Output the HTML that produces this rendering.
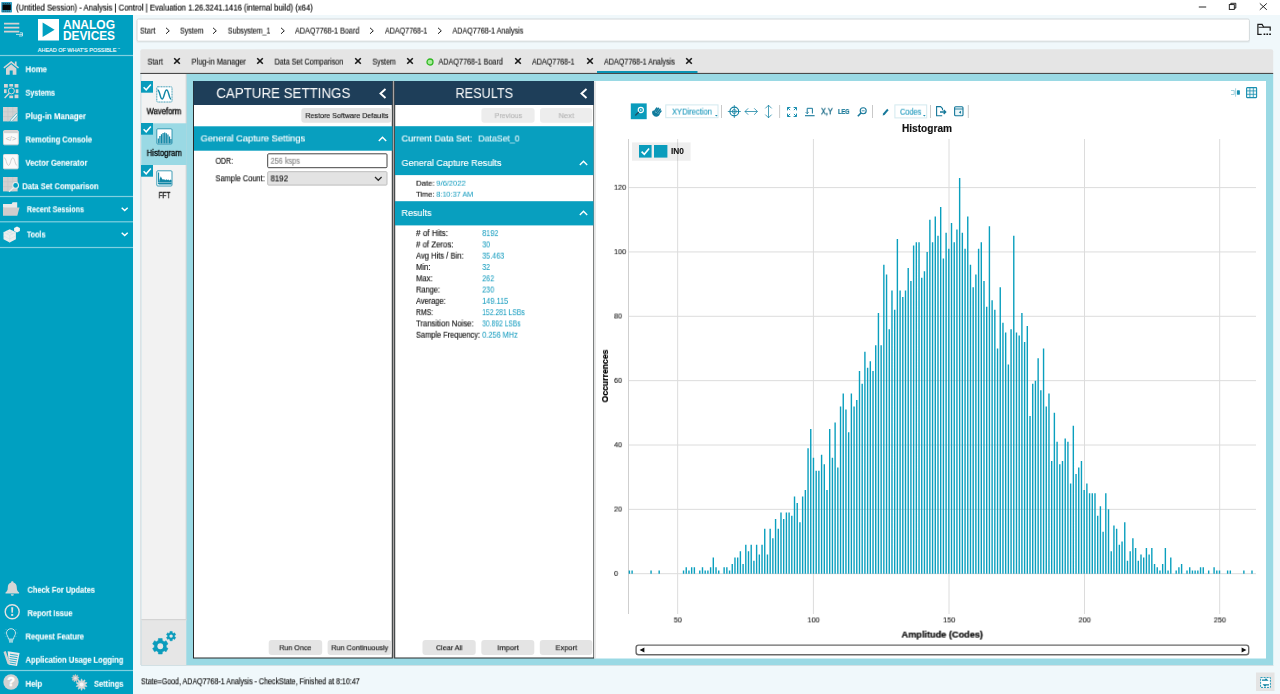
<!DOCTYPE html>
<html lang="en"><head><meta charset="utf-8"><title>(Untitled Session) - Analysis | Control | Evaluation</title><style>
*{box-sizing:border-box;margin:0;padding:0}
html,body{width:1280px;height:694px;overflow:hidden;background:#f0f8fb;font-family:"Liberation Sans",sans-serif}
#app{position:relative;width:1280px;height:694px;overflow:hidden}
.b{position:absolute}
.t{position:absolute;white-space:nowrap;transform-origin:0 50%;will-change:transform;-webkit-text-stroke:.15px}
svg{position:absolute;overflow:visible}
svg.f{left:0;top:0}
svg text{font-family:"Liberation Sans",sans-serif}
</style></head><body><div id="app">
<svg class="f" width="1280" height="694" viewBox="0 0 1280 694">
<rect x="0" y="0" width="1280" height="15" fill="#ffffff"/>
</svg>
<svg style="left:2px;top:1px" width="12" height="12" viewBox="0 0 12 12"><rect x="-.7" y="0.9" width="10.7" height="10.5" rx=".7" fill="#2f9cc0"/><rect x=".5" y="3.5" width="8.3" height="5.5" fill="#050708"/><path d="M.6 2.5h8M.6 10.1h8" stroke="#123645" stroke-width="1" stroke-dasharray="1.2 .8"/></svg>
<span class="t" style="left:16px;top:1px;font-size:8.6px;line-height:12px;color:#000;transform:translate(0.00px,0.60px) scaleX(0.900);">(Untitled Session) - Analysis | Control | Evaluation 1.26.3241.1416 (internal build) (x64)</span>
<svg style="left:1190px;top:0" width="90" height="15" viewBox="0 0 90 15" fill="none" stroke="#111" stroke-width="0.9"><path d="M8.8 7h7.4"/><rect x="39.3" y="4.6" width="5" height="4.8"/><path d="M40.8 4.6V3.3h5v4.8h-1.5"/><path d="M69.8 3.4l7 6.4M76.8 3.4l-7 6.4"/></svg>
<svg class="f" width="1280" height="694" viewBox="0 0 1280 694">
<rect x="0" y="15" width="133" height="679" fill="#00a0c1"/>
<rect x="0" y="54.9" width="133" height="1.2" fill="rgba(255,255,255,.5)"/>
<rect x="0" y="195.9" width="133" height="1.2" fill="rgba(255,255,255,.5)"/>
<rect x="0" y="221.2" width="133" height="1.2" fill="rgba(255,255,255,.5)"/>
<rect x="0" y="246.9" width="133" height="1.2" fill="rgba(255,255,255,.5)"/>
<rect x="0" y="669.9" width="133" height="1.2" fill="rgba(255,255,255,.5)"/>
</svg>
<svg style="left:3px;top:21px" width="22" height="18" viewBox="0 0 22 18" fill="none" stroke="#d8d2d2" stroke-width="1.6"><path d="M1 2.6h15.300M1 6.600h15.300M1 10.600h15.3"/><path stroke-width="0.9" stroke="#cfe6ec" d="M13 13.400h6.500M17 11.800h2.500v3.200H16"/></svg>
<svg style="left:38px;top:18px" width="82" height="36" viewBox="0 0 82 36"><rect x="0" y="1" width="21" height="21.5" fill="#fff"/><path d="M4.6 4.6v14.3l12-7.15z" fill="#00a0c1"/><text x="25" y="10.6" font-size="12.6" font-weight="700" fill="#fff" textLength="52" lengthAdjust="spacingAndGlyphs">ANALOG</text><text x="25" y="22.4" font-size="12.6" font-weight="700" fill="#fff" textLength="52" lengthAdjust="spacingAndGlyphs">DEVICES</text><text x="-.2" y="33.5" font-size="5.6" fill="#f4fbfd" stroke="#f4fbfd" stroke-width=".15" textLength="78.5" lengthAdjust="spacingAndGlyphs">AHEAD OF WHAT'S POSSIBLE</text><text x="79.3" y="31.6" font-size="3" fill="#f4fbfd">™</text></svg>
<span class="t" style="left:25px;top:63px;font-size:8.6px;line-height:12px;color:#fff;transform:translate(0.50px,0.30px) scaleX(0.900);font-weight:700;-webkit-text-stroke:0.08px;">Home</span>
<span class="t" style="left:25px;top:86px;font-size:8.6px;line-height:12px;color:#fff;transform:translate(0.50px,0.70px) scaleX(0.834);font-weight:700;-webkit-text-stroke:0.08px;">Systems</span>
<span class="t" style="left:25px;top:110px;font-size:8.6px;line-height:12px;color:#fff;transform:translate(0.50px,0.20px) scaleX(0.904);font-weight:700;-webkit-text-stroke:0.08px;">Plug-in Manager</span>
<span class="t" style="left:25px;top:133px;font-size:8.6px;line-height:12px;color:#fff;transform:translate(0.50px,0.50px) scaleX(0.875);font-weight:700;-webkit-text-stroke:0.08px;">Remoting Console</span>
<span class="t" style="left:25px;top:156px;font-size:8.6px;line-height:12px;color:#fff;transform:translate(0.50px,0.80px) scaleX(0.886);font-weight:700;-webkit-text-stroke:0.08px;">Vector Generator</span>
<span class="t" style="left:22px;top:180px;font-size:8.6px;line-height:12px;color:#fff;transform:translate(0.30px,0.20px) scaleX(0.876);font-weight:700;-webkit-text-stroke:0.08px;">Data Set Comparison</span>
<span class="t" style="left:26px;top:203px;font-size:8.6px;line-height:12px;color:#fff;transform:translate(0.80px,0.30px) scaleX(0.832);font-weight:700;-webkit-text-stroke:0.08px;">Recent Sessions</span>
<span class="t" style="left:26px;top:228px;font-size:8.6px;line-height:12px;color:#fff;transform:translate(0.80px,0.50px) scaleX(0.843);font-weight:700;-webkit-text-stroke:0.08px;">Tools</span>
<span class="t" style="left:27px;top:583px;font-size:8.6px;line-height:12px;color:#fff;transform:translate(0.50px,0.80px) scaleX(0.861);font-weight:700;-webkit-text-stroke:0.08px;">Check For Updates</span>
<span class="t" style="left:27px;top:607px;font-size:8.6px;line-height:12px;color:#fff;transform:translate(0.50px,0.20px) scaleX(0.864);font-weight:700;-webkit-text-stroke:0.08px;">Report Issue</span>
<span class="t" style="left:25px;top:630px;font-size:8.6px;line-height:12px;color:#fff;transform:translate(0.50px,0.50px) scaleX(0.868);font-weight:700;-webkit-text-stroke:0.08px;">Request Feature</span>
<span class="t" style="left:25px;top:653px;font-size:8.6px;line-height:12px;color:#fff;transform:translate(0.50px,0.80px) scaleX(0.880);font-weight:700;-webkit-text-stroke:0.08px;">Application Usage Logging</span>
<span class="t" style="left:25px;top:677px;font-size:8.6px;line-height:12px;color:#fff;transform:translate(0.50px,0.80px) scaleX(0.901);font-weight:700;-webkit-text-stroke:0.08px;">Help</span>
<span class="t" style="left:94px;top:677px;font-size:8.6px;line-height:12px;color:#fff;transform:translate(0.00px,0.80px) scaleX(0.870);font-weight:700;-webkit-text-stroke:0.08px;">Settings</span>
<svg style="left:2.8px;top:60px" width="17" height="16" viewBox="0 0 17 16"><path d="M8.2 1L0.4 7.300l.9 1.100L8.2 3l6.9 5.4.9-1.1-2.4-1.900V1.600h-1.700v2.300z" fill="#d6d6d6"/><path d="M3 8.400v6.400h3.700v-4.300h3v4.300h3.700V8.400L8.2 4.300z" fill="#d6d6d6"/></svg>
<svg style="left:3.6px;top:84px" width="15" height="15" viewBox="0 0 15 15"><g fill="#d6d6d6"><rect x="0" y="0" width="3.8" height="3.6"/><rect x="5.3" y="0" width="3.8" height="2.6"/><rect x="10.6" y="0" width="3.8" height="3.6"/><rect x="0" y="5.3" width="2.6" height="3.8"/><rect x="11.8" y="5.3" width="2.6" height="3.8"/><rect x="5.3" y="11.6" width="3.8" height="2.6"/><rect x="10.6" y="10.6" width="3.8" height="3.6"/></g><circle cx="7.4" cy="6.9" r="3" fill="none" stroke="#d6d6d6" stroke-width="1"/><path d="M5.2 9.300L.6 14" stroke="#d6d6d6" stroke-width="1.5"/></svg>
<svg style="left:3px;top:107px" width="16" height="15" viewBox="0 0 16 15"><rect x="0" y="0" width="14.6" height="14.4" fill="#d2d2d2"/><path d="M0 4.800h14.600M0 9.600h14.600M4.9 0v14.400M9.8 0v14.4" stroke="#c0c6c8" stroke-width=".7"/><path d="M7.6 12.800l5.8-6.4 1.6 1.4-5.8 6.4-2.3.8z" fill="#f0f0f0" stroke="#00a0c1" stroke-width=".5"/></svg>
<svg style="left:3px;top:130px" width="16" height="15.5" viewBox="0 0 16 15.5"><rect x=".5" y=".5" width="14.8" height="14.3" rx="1" fill="#fafafa" stroke="#dcd4d4"/><rect x="1" y="1" width="13.8" height="2.2" fill="#d4d4d4"/><text x="7.9" y="11.3" font-size="6.6" text-anchor="middle" fill="#b8b8b8" textLength="10.5" lengthAdjust="spacingAndGlyphs">&lt;/&gt;</text></svg>
<svg style="left:3.2px;top:153.5px" width="16" height="15.5" viewBox="0 0 16 15.5"><rect x=".5" y=".5" width="14.6" height="14.3" rx=".8" fill="#fafafa" stroke="#e2e2e2"/><path d="M1.2 3.800c2 0 2.3 7.6 4.3 7.600s2.3-7.6 4.3-7.6 2.3 7.6 4.3 7.6" fill="none" stroke="#c4c4c4" stroke-width=".8"/></svg>
<svg style="left:3px;top:177px" width="17" height="15.5" viewBox="0 0 17 15.5"><rect x="0" y="0" width="14.6" height="14.4" fill="#d3cfcf"/><path d="M0 4.800h14.600M0 9.600h14.600M4.9 0v14.400M9.8 0v14.4" stroke="#c3c6c8" stroke-width=".7"/><circle cx="12.6" cy="8.4" r="2.9" fill="#00a0c1" stroke="#ececec" stroke-width="1.1"/><path d="M10.4 10.700L6 14.7" stroke="#ececec" stroke-width="1.3"/></svg>
<svg style="left:3.2px;top:202px" width="17" height="15" viewBox="0 0 17 15"><path d="M0 2h8.600l1-1.700h4.600V7H0z" fill="#e9e9e9"/><path d="M0 13.800V5l1.6 .6h14.900l-2.2 8.200z" fill="#d0cccc"/></svg>
<svg style="left:3px;top:226px" width="18" height="17" viewBox="0 0 18 17"><path d="M6.7 3.300l6.2 3v7l-6.2 3.3-6.2-3.300v-7z" fill="#ededed"/><path d="M.5 6.300l6.2 3 6.2-3M6.7 9.300v7.300M3.6 4.800l6.2 3M9.8 4.800l-6.2 3M.5 9.800l6.2 3.2 6.2-3.2" stroke="#c9dfe5" stroke-width=".5" fill="none"/><path d="M14 .4l2.9 1.500v3.200L14 6.600l-2.9-1.500V1.900z" fill="#f4f4f4"/></svg>
<svg style="left:121px;top:207.2px" width="8" height="5" viewBox="0 0 8 5"><path d="M.7 .7l3 2.9 3-2.9" fill="none" stroke="#fff" stroke-width="1.4"/></svg>
<svg style="left:121px;top:232.39999999999998px" width="8" height="5" viewBox="0 0 8 5"><path d="M.7 .7l3 2.9 3-2.9" fill="none" stroke="#fff" stroke-width="1.4"/></svg>
<svg style="left:5px;top:580.5px" width="15" height="16" viewBox="0 0 15 16"><path d="M7.3 0.3c.8 0 1.2.5 1.2 1.2 2.2.7 3.3 2.6 3.3 5 0 3 1 4 2.3 5v1H.5v-1c1.3-1 2.3-2 2.3-5 0-2.4 1.1-4.3 3.3-5 0-.7.4-1.2 1.2-1.200z" fill="#d6d6d6"/><path d="M5.8 13.300h3a1.5 1.5 0 0 1-3 0z" fill="#d6d6d6"/></svg>
<svg style="left:4px;top:603.5px" width="17" height="17" viewBox="0 0 17 17"><circle cx="8.2" cy="7.8" r="7" fill="none" stroke="#e2e2e2" stroke-width="1.4"/><path d="M7.2 3.3h2l-.3 5.4H7.500z" fill="#e2e2e2"/><rect x="7.2" y="9.9" width="2" height="2" fill="#e2e2e2"/></svg>
<svg style="left:4px;top:627px" width="16" height="18" viewBox="0 0 16 18"><path d="M7 1.700c2.7 0 4.5 2 4.5 4.4 0 2.3-1.8 3.2-2 6H4.500c-.2-2.8-2-3.7-2-6C2.5 3.7 4.3 1.7 7 1.700z" fill="none" stroke="#c9e3e9" stroke-width="1"/><path d="M4.8 13.200h4.400M5 14.800h4" stroke="#c9e3e9" stroke-width="1.2"/><path d="M1.5 2l1 1M12.5 2l-1 1M.3 6h1.200M12.5 6h1.200M1.5 10l1-1M12.5 10l-1-1" stroke="#6fc3d6" stroke-width=".6"/></svg>
<svg style="left:3px;top:650px" width="17" height="18" viewBox="0 0 17 18"><path d="M4.6 1.200l12 1.8-2.6 13-7.8-1.200z" fill="#ebebeb"/><path d="M7 4.200l7.8 1.200M6.7 6.400l7.7 1.200M6.5 8.600l7.5 1.200M6.3 10.800l7.2 1.100M6.2 13l6.8 1" stroke="#00a0c1" stroke-width=".8"/><path d="M.5 1.900L2.7 1l4.2 11.7-.5 2.6-2-1.700z" fill="#d6d2d2"/></svg>
<svg style="left:3px;top:674.3px" width="16.5" height="16.5" viewBox="0 0 16.5 16.5"><circle cx="8" cy="8" r="7.7" fill="#d2d2d2"/><text x="8" y="12.4" font-size="12.5" font-weight="700" text-anchor="middle" fill="#fff" stroke="#fff" stroke-width=".5">?</text></svg>
<svg style="left:70px;top:672px" width="20" height="22" viewBox="0 0 20 22"><polygon points="4.68,3.87 5.22,2.50 5.58,2.50 6.12,3.87 6.35,3.95 7.63,3.25 7.92,3.49 7.45,4.88 7.57,5.08 9.01,5.38 9.07,5.74 7.82,6.51 7.78,6.74 8.69,7.89 8.51,8.21 7.06,7.99 6.88,8.15 6.84,9.61 6.49,9.74 5.52,8.64 5.28,8.64 4.31,9.74 3.96,9.61 3.92,8.15 3.74,7.99 2.29,8.21 2.11,7.89 3.02,6.74 2.98,6.51 1.73,5.74 1.79,5.38 3.23,5.08 3.35,4.88 2.88,3.49 3.17,3.25 4.45,3.95" fill="#c6c6c6" stroke="#c6c6c6" stroke-width=".5" stroke-linejoin="round"/><circle cx="5.4" cy="6.2" r="1.2" fill="#e4e4e4"/><polygon points="10.62,9.20 11.37,6.90 11.83,6.90 12.58,9.20 12.81,9.28 14.76,7.86 15.13,8.13 14.39,10.43 14.53,10.62 16.95,10.62 17.09,11.06 15.13,12.48 15.13,12.72 17.09,14.14 16.95,14.58 14.53,14.58 14.39,14.77 15.13,17.07 14.76,17.34 12.81,15.92 12.58,16.00 11.83,18.30 11.37,18.30 10.62,16.00 10.39,15.92 8.44,17.34 8.07,17.07 8.81,14.77 8.67,14.58 6.25,14.58 6.11,14.14 8.07,12.72 8.07,12.48 6.11,11.06 6.25,10.62 8.67,10.62 8.81,10.43 8.07,8.13 8.44,7.86 10.39,9.28" fill="#d8d8d8" stroke="#d8d8d8" stroke-width=".5" stroke-linejoin="round"/><circle cx="11.6" cy="12.6" r="2" fill="#f6f6f6"/></svg>
<svg class="f" width="1280" height="694" viewBox="0 0 1280 694">
<rect x="136.5" y="19.5" width="1113.4" height="23.2" rx="1.5" fill="rgba(0,0,0,.05)"/>
<rect x="137" y="19" width="1112.4" height="22.2" rx="1.5" fill="#fff" stroke="#d3d8da" stroke-width="1"/>
</svg>
<span class="t" style="left:140px;top:25px;font-size:8.3px;line-height:11px;color:#1a1a1a;transform:translate(0.00px,0.60px) scaleX(0.873);">Start</span>
<span class="t" style="left:180px;top:25px;font-size:8.3px;line-height:11px;color:#1a1a1a;transform:translate(0.00px,0.60px) scaleX(0.849);">System</span>
<span class="t" style="left:227px;top:25px;font-size:8.3px;line-height:11px;color:#1a1a1a;transform:translate(0.80px,0.60px) scaleX(0.845);">Subsystem_1</span>
<span class="t" style="left:295px;top:25px;font-size:8.3px;line-height:11px;color:#1a1a1a;transform:translate(0.00px,0.60px) scaleX(0.871);">ADAQ7768-1 Board</span>
<span class="t" style="left:385px;top:25px;font-size:8.3px;line-height:11px;color:#1a1a1a;transform:translate(0.00px,0.60px) scaleX(0.857);">ADAQ7768-1</span>
<span class="t" style="left:452px;top:25px;font-size:8.3px;line-height:11px;color:#1a1a1a;transform:translate(0.50px,0.60px) scaleX(0.862);">ADAQ7768-1 Analysis</span>
<svg style="left:164.8px;top:27px" width="6" height="8" viewBox="0 0 6 8"><path d="M1 .8l3.3 3-3.3 3" fill="none" stroke="#222" stroke-width="1"/></svg>
<svg style="left:211.8px;top:27px" width="6" height="8" viewBox="0 0 6 8"><path d="M1 .8l3.3 3-3.3 3" fill="none" stroke="#222" stroke-width="1"/></svg>
<svg style="left:279.5px;top:27px" width="6" height="8" viewBox="0 0 6 8"><path d="M1 .8l3.3 3-3.3 3" fill="none" stroke="#222" stroke-width="1"/></svg>
<svg style="left:368.8px;top:27px" width="6" height="8" viewBox="0 0 6 8"><path d="M1 .8l3.3 3-3.3 3" fill="none" stroke="#222" stroke-width="1"/></svg>
<svg style="left:437.3px;top:27px" width="6" height="8" viewBox="0 0 6 8"><path d="M1 .8l3.3 3-3.3 3" fill="none" stroke="#222" stroke-width="1"/></svg>
<svg style="left:1257px;top:23px" width="17" height="13" viewBox="0 0 17 13"><path d="M.9 11.300V1.400h4.200l1.6 2.800h6.500v3.6" fill="none" stroke="#1a1a1a" stroke-width="1.2"/><path d="M.3 11.400h4.4" stroke="#1a1a1a" stroke-width="1.2"/><path d="M6.6 11.300h1.700M9.4 11.300h1.700M12.2 11.300h1.7" stroke="#111" stroke-width="1.5"/><path d="M1.6 4.300h5" stroke="#1a1a1a" stroke-width=".9"/></svg>
<svg class="f" width="1280" height="694" viewBox="0 0 1280 694">
<rect x="140.3" y="49.3" width="1132.9" height="24.2" rx="2" fill="#e5e5e5"/>
<rect x="140.3" y="72.9" width="1132.9" height="1.1" fill="#4a4a4a"/>
<rect x="597" y="71" width="100.5" height="2" fill="#0a94b4"/>
</svg>
<span class="t" style="left:147px;top:56px;font-size:8.3px;line-height:11px;color:#1a1a1a;transform:translate(0.50px,0.60px) scaleX(0.873);">Start</span>
<svg style="left:173px;top:57.3px" width="8" height="8" viewBox="0 0 8 8"><path d="M1.2 1.2l5.6 5.6M6.8 1.2l-5.6 5.6" fill="none" stroke="#1a1a1a" stroke-width="1.6"/></svg>
<span class="t" style="left:191px;top:56px;font-size:8.3px;line-height:11px;color:#1a1a1a;transform:translate(0.50px,0.60px) scaleX(0.895);">Plug-in Manager</span>
<svg style="left:256px;top:57.3px" width="8" height="8" viewBox="0 0 8 8"><path d="M1.2 1.2l5.6 5.6M6.8 1.2l-5.6 5.6" fill="none" stroke="#1a1a1a" stroke-width="1.6"/></svg>
<span class="t" style="left:274px;top:56px;font-size:8.3px;line-height:11px;color:#1a1a1a;transform:translate(0.50px,0.60px) scaleX(0.867);">Data Set Comparison</span>
<svg style="left:354px;top:57.3px" width="8" height="8" viewBox="0 0 8 8"><path d="M1.2 1.2l5.6 5.6M6.8 1.2l-5.6 5.6" fill="none" stroke="#1a1a1a" stroke-width="1.6"/></svg>
<span class="t" style="left:372px;top:56px;font-size:8.3px;line-height:11px;color:#1a1a1a;transform:translate(0.50px,0.60px) scaleX(0.842);">System</span>
<svg style="left:406px;top:57.3px" width="8" height="8" viewBox="0 0 8 8"><path d="M1.2 1.2l5.6 5.6M6.8 1.2l-5.6 5.6" fill="none" stroke="#1a1a1a" stroke-width="1.6"/></svg>
<span class="t" style="left:438px;top:56px;font-size:8.3px;line-height:11px;color:#1a1a1a;transform:translate(0.50px,0.60px) scaleX(0.871);">ADAQ7768-1 Board</span>
<svg style="left:513.5px;top:57.3px" width="8" height="8" viewBox="0 0 8 8"><path d="M1.2 1.2l5.6 5.6M6.8 1.2l-5.6 5.6" fill="none" stroke="#1a1a1a" stroke-width="1.6"/></svg>
<span class="t" style="left:532px;top:56px;font-size:8.3px;line-height:11px;color:#1a1a1a;transform:translate(0.00px,0.60px) scaleX(0.861);">ADAQ7768-1</span>
<svg style="left:585.5px;top:57.3px" width="8" height="8" viewBox="0 0 8 8"><path d="M1.2 1.2l5.6 5.6M6.8 1.2l-5.6 5.6" fill="none" stroke="#1a1a1a" stroke-width="1.6"/></svg>
<span class="t" style="left:604px;top:56px;font-size:8.3px;line-height:11px;color:#1a1a1a;transform:translate(0.00px,0.60px) scaleX(0.862);">ADAQ7768-1 Analysis</span>
<svg style="left:685.3px;top:57.3px" width="8" height="8" viewBox="0 0 8 8"><path d="M1.2 1.2l5.6 5.6M6.8 1.2l-5.6 5.6" fill="none" stroke="#1a1a1a" stroke-width="1.6"/></svg>
<svg style="left:426px;top:57.7px" width="8" height="8" viewBox="0 0 8 8"><circle cx="4" cy="4" r="3" fill="#a9ec9c" stroke="#2fb821" stroke-width="1.3"/></svg>
<span class="t" style="left:141px;top:676px;font-size:8.2px;line-height:11px;color:#111;transform:translate(0.00px,0.30px) scaleX(0.865);">State=Good, ADAQ7768-1 Analysis - CheckState, Finished at 8:10:47</span>
<svg class="f" width="1280" height="694" viewBox="0 0 1280 694">
<rect x="1256" y="672.5" width="18.5" height="18.5" fill="#e4e4e4"/>
</svg>
<svg style="left:1260px;top:676.5px" width="11" height="11" viewBox="0 0 11 11"><rect x=".6" y=".6" width="9.8" height="9.8" fill="#fff" stroke="#0a8fb0" stroke-width=".9" stroke-dasharray="2 1"/><path d="M2 3.200h5l-1.5-1.500M9 7.800H4l1.5 1.5" stroke="#0a7f9f" stroke-width="1.3" fill="none"/></svg>
<svg class="f" width="1280" height="694" viewBox="0 0 1280 694">
<rect x="141" y="74" width="1132.2" height="591" fill="#9ad9e4"/>
<rect x="141" y="665" width="1132.5" height="1" fill="rgba(120,150,160,.25)"/>
<rect x="140.4" y="74" width="1" height="591" fill="#cfd4d6"/>
<rect x="141.3" y="74" width="45" height="546.5" fill="#f2f2f2"/>
<rect x="185.7" y="74" width="0.8" height="546" fill="#cdcdcd"/>
<rect x="141.3" y="123.3" width="45.4" height="41.7" fill="#9ad9e4"/>
<rect x="141.3" y="619.2" width="45" height="45.8" fill="#e6e6e6"/>
<rect x="141.3" y="619.2" width="45" height="1" fill="#cfcfcf"/>
</svg>
<svg style="left:140.7px;top:81px" width="12" height="11.7" viewBox="0 0 12 11.7"><rect width="12" height="11.7" fill="#0a9cbc"/><path d="M2.6 6.200l2.6 2.6 4.6-5.4" fill="none" stroke="#fff" stroke-width="1.5"/></svg>
<svg style="left:140.7px;top:123.1px" width="12" height="11.7" viewBox="0 0 12 11.7"><rect width="12" height="11.7" fill="#0a9cbc"/><path d="M2.6 6.200l2.6 2.6 4.6-5.4" fill="none" stroke="#fff" stroke-width="1.5"/></svg>
<svg style="left:140.7px;top:165.2px" width="12" height="11.7" viewBox="0 0 12 11.7"><rect width="12" height="11.7" fill="#0a9cbc"/><path d="M2.6 6.200l2.6 2.6 4.6-5.4" fill="none" stroke="#fff" stroke-width="1.5"/></svg>
<svg style="left:155.8px;top:86px" width="17" height="17" viewBox="0 0 17 17"><rect x=".8" y=".8" width="15.2" height="15.2" rx="1" fill="#fff" stroke="#1287a6" stroke-width=".8" stroke-dasharray="1.1 .5"/><path d="M1.6 4c2.3 0 2.4 9 4.5 9s2.3-9 4.5-9 2.4 9 4.5 9" fill="none" stroke="#1287a6" stroke-width="1.5"/></svg>
<svg style="left:155.8px;top:128px" width="17" height="17" viewBox="0 0 17 17"><rect x=".8" y=".8" width="15.2" height="15.2" rx="1" fill="#fff" stroke="#1287a6" stroke-width=".8"/><path d="M2.3 15.500V10.500M3.9 15.500V8M5.5 15.500V6.200M7.1 15.500V5M8.7 15.500V4.600M10.3 15.500V5.200M11.9 15.500V6.500M13.5 15.500V8.600M15 15.500V11" stroke="#1287a6" stroke-width="1.250"/></svg>
<svg style="left:155.8px;top:170px" width="17" height="17" viewBox="0 0 17 17"><rect x=".8" y=".8" width="15.2" height="15.2" rx="1" fill="#fff" stroke="#1287a6" stroke-width=".8"/><path d="M2.6 2.500V14" stroke="#1287a6" stroke-width="1.1"/><path d="M2.6 14.600h13v-4.400l-1-.6-1 .8-1.2-1-1 .7-1.2-.8-1 .9-1.2-1.2-1 .8-1-1-1.2-2.5-1.2 3z" fill="#1287a6"/><path d="M1.5 12.500h14" stroke="#fff" stroke-width=".4"/></svg>
<span class="t" style="left:146px;top:106px;font-size:8.4px;line-height:11px;color:#000;transform:translate(0.60px,0.20px) scaleX(0.917);-webkit-text-stroke:0.3px;">Waveform</span>
<span class="t" style="left:146px;top:147px;font-size:8.4px;line-height:11px;color:#000;transform:translate(0.70px,0.90px) scaleX(0.917);-webkit-text-stroke:0.3px;">Histogram</span>
<span class="t" style="left:158px;top:190px;font-size:8.4px;line-height:11px;color:#000;transform:translate(0.60px,0.10px) scaleX(0.767);-webkit-text-stroke:0.3px;">FFT</span>
<svg style="left:150px;top:628px" width="28" height="30" viewBox="0 0 28 30"><polygon points="8.27,12.52 8.40,10.48 12.20,10.48 12.33,12.52 14.25,13.63 16.08,12.72 17.98,16.01 16.28,17.14 16.28,19.36 17.98,20.49 16.08,23.78 14.25,22.87 12.33,23.98 12.20,26.02 8.40,26.02 8.27,23.98 6.35,22.87 4.52,23.78 2.62,20.49 4.32,19.36 4.32,17.14 2.62,16.01 4.52,12.72 6.35,13.63" fill="#0a9cbc" stroke="#0a9cbc" stroke-width=".5" stroke-linejoin="round"/><circle cx="10.3" cy="18.25" r="2.9" fill="#e6e6e6"/><polygon points="19.92,4.75 19.96,3.44 22.24,3.44 22.28,4.75 23.41,5.40 24.57,4.78 25.71,6.76 24.59,7.45 24.59,8.75 25.71,9.44 24.57,11.42 23.41,10.80 22.28,11.45 22.24,12.76 19.96,12.76 19.92,11.45 18.79,10.80 17.63,11.42 16.49,9.44 17.61,8.75 17.61,7.45 16.49,6.76 17.63,4.78 18.79,5.40" fill="#0a9cbc" stroke="#0a9cbc" stroke-width=".5" stroke-linejoin="round"/><circle cx="21.1" cy="8.1" r="1.7" fill="#e6e6e6"/></svg>
<svg class="f" width="1280" height="694" viewBox="0 0 1280 694">
<rect x="392.6" y="81" width="1.8" height="577.5" fill="#a9a4a4"/>
<rect x="193.5" y="81.5" width="198.8" height="576.5" fill="#fff" stroke="#2b2b2b" stroke-width="1"/>
<rect x="193.5" y="81" width="198.8" height="24" fill="#1e3e59"/>
</svg>
<span class="t" style="left:216px;top:83px;font-size:14px;line-height:19px;color:#fff;transform:translate(0.30px,0.90px) scale(0.952,1.090);-webkit-text-stroke:0px;">CAPTURE SETTINGS</span>
<svg style="left:378.8px;top:88px" width="8" height="11" viewBox="0 0 8 11"><path d="M6.5 1L1.5 5.500l5 4.5" fill="none" stroke="#fff" stroke-width="1.9"/></svg>
<svg class="f" width="1280" height="694" viewBox="0 0 1280 694">
<rect x="394.7" y="81.5" width="199.2" height="576.5" fill="#fff" stroke="#2b2b2b" stroke-width="1"/>
<rect x="394.7" y="81" width="199.2" height="24" fill="#1e3e59"/>
</svg>
<span class="t" style="left:455px;top:83px;font-size:14px;line-height:19px;color:#fff;transform:translate(0.50px,0.90px) scale(0.905,1.090);-webkit-text-stroke:0px;">RESULTS</span>
<svg style="left:579.6px;top:88px" width="8" height="11" viewBox="0 0 8 11"><path d="M6.5 1L1.5 5.500l5 4.5" fill="none" stroke="#fff" stroke-width="1.9"/></svg>
<svg class="f" width="1280" height="694" viewBox="0 0 1280 694">
<rect x="301.3" y="108" width="90" height="14.8" rx="3" fill="#e4e4e4"/>
</svg>
<span class="t" style="left:305px;top:110px;font-size:8.1px;line-height:11px;color:#111;transform:translate(0.40px,0.10px) scaleX(0.878);">Restore Software Defaults</span>
<svg class="f" width="1280" height="694" viewBox="0 0 1280 694">
<rect x="194" y="126.3" width="198.5" height="24.4" fill="#089fbf"/>
</svg>
<span class="t" style="left:200px;top:131px;font-size:9.6px;line-height:13px;color:#fff;transform:translate(0.60px,0.40px) scaleX(0.965);">General Capture Settings</span>
<svg style="left:378.3px;top:135.9px" width="9" height="6" viewBox="0 0 9 6"><path d="M.8 5l3.7-3.700L8.2 5" fill="none" stroke="#fff" stroke-width="1.4"/></svg>
<span class="t" style="left:215px;top:155px;font-size:8.2px;line-height:11px;color:#111;transform:translate(0.50px,0.80px) scaleX(0.854);">ODR:</span>
<svg class="f" width="1280" height="694" viewBox="0 0 1280 694">
<rect x="267.7" y="153.8" width="119.3" height="13.9" rx="1" fill="#fff" stroke="#444" stroke-width="1"/>
</svg>
<span class="t" style="left:270px;top:155px;font-size:8.2px;line-height:11px;color:#8a8a8a;transform:translate(0.60px,0.80px) scaleX(0.893);">256 ksps</span>
<span class="t" style="left:215px;top:173px;font-size:8.2px;line-height:11px;color:#111;transform:translate(0.50px,0.30px) scaleX(0.909);">Sample Count:</span>
<svg class="f" width="1280" height="694" viewBox="0 0 1280 694">
<rect x="267.7" y="171.7" width="119.3" height="13.4" rx="1" fill="#e3e3e3" stroke="#bdbdbd" stroke-width="1"/>
</svg>
<span class="t" style="left:270px;top:173px;font-size:8.2px;line-height:11px;color:#111;transform:translate(0.60px,0.40px) scaleX(0.954);">8192</span>
<svg style="left:374.4px;top:175.8px" width="9" height="6" viewBox="0 0 9 6"><path d="M1 1l3.3 3.300L7.6 1" fill="none" stroke="#2a2a2a" stroke-width="1.250"/></svg>
<svg class="f" width="1280" height="694" viewBox="0 0 1280 694">
<rect x="268.7" y="640" width="53.5" height="15" rx="3" fill="#e4e4e4"/>
</svg>
<span class="t" style="left:279px;top:642px;font-size:8.1px;line-height:11px;color:#111;transform:translate(0.30px,0.20px) scaleX(0.877);">Run Once</span>
<svg class="f" width="1280" height="694" viewBox="0 0 1280 694">
<rect x="327.6" y="640" width="63.8" height="15" rx="3" fill="#e4e4e4"/>
</svg>
<span class="t" style="left:331px;top:642px;font-size:8.1px;line-height:11px;color:#111;transform:translate(0.30px,0.20px) scaleX(0.891);">Run Continuously</span>
<svg class="f" width="1280" height="694" viewBox="0 0 1280 694">
<rect x="481.4" y="108" width="53.2" height="14.8" rx="3" fill="#ededed"/>
</svg>
<span class="t" style="left:494px;top:110px;font-size:8.1px;line-height:11px;color:#b5b5b5;transform:translate(0.60px,0.10px) scaleX(0.873);">Previous</span>
<svg class="f" width="1280" height="694" viewBox="0 0 1280 694">
<rect x="540" y="108" width="52.2" height="14.8" rx="3" fill="#ededed"/>
</svg>
<span class="t" style="left:558px;top:110px;font-size:8.1px;line-height:11px;color:#b5b5b5;transform:translate(0.60px,0.10px) scaleX(0.931);">Next</span>
<svg class="f" width="1280" height="694" viewBox="0 0 1280 694">
<rect x="395" y="126.2" width="198.5" height="48.9" fill="#089fbf"/>
</svg>
<span class="t" style="left:401px;top:131px;font-size:9.6px;line-height:13px;color:#fff;transform:translate(0.50px,0.50px) scaleX(0.948);">Current Data Set:</span>
<span class="t" style="left:478px;top:131px;font-size:9.6px;line-height:13px;color:#e6f6fa;transform:translate(0.30px,0.50px) scaleX(0.910);">DataSet_0</span>
<span class="t" style="left:401px;top:156px;font-size:9.6px;line-height:13px;color:#fff;transform:translate(0.50px,0.00px) scaleX(0.947);">General Capture Results</span>
<svg style="left:579.1px;top:160.4px" width="9" height="6" viewBox="0 0 9 6"><path d="M.8 5l3.7-3.700L8.2 5" fill="none" stroke="#fff" stroke-width="1.4"/></svg>
<span class="t" style="left:416px;top:177px;font-size:8px;line-height:11px;color:#111;transform:translate(0.00px,0.70px) scaleX(0.968);">Date:</span>
<span class="t" style="left:436px;top:177px;font-size:8px;line-height:11px;color:#1c9fc0;transform:translate(0.30px,0.70px) scaleX(0.941);-webkit-text-stroke:0.05px;">9/6/2022</span>
<span class="t" style="left:416px;top:188px;font-size:8px;line-height:11px;color:#111;transform:translate(0.00px,0.70px) scaleX(0.939);">Time:</span>
<span class="t" style="left:436px;top:188px;font-size:8px;line-height:11px;color:#1c9fc0;transform:translate(0.30px,0.70px) scaleX(0.914);-webkit-text-stroke:0.05px;">8:10:37 AM</span>
<svg class="f" width="1280" height="694" viewBox="0 0 1280 694">
<rect x="395" y="201.2" width="198.5" height="24.2" fill="#089fbf"/>
</svg>
<span class="t" style="left:401px;top:206px;font-size:9.6px;line-height:13px;color:#fff;transform:translate(0.50px,0.00px) scaleX(0.937);">Results</span>
<svg style="left:579.1px;top:210.4px" width="9" height="6" viewBox="0 0 9 6"><path d="M.8 5l3.7-3.700L8.2 5" fill="none" stroke="#fff" stroke-width="1.4"/></svg>
<span class="t" style="left:416px;top:228px;font-size:8.3px;line-height:11px;color:#111;transform:translate(0.00px,0.10px) scaleX(0.977);"># of Hits:</span>
<span class="t" style="left:482px;top:228px;font-size:8.3px;line-height:11px;color:#1c9fc0;transform:translate(0.20px,0.10px) scaleX(0.883);-webkit-text-stroke:0.05px;">8192</span>
<span class="t" style="left:416px;top:239px;font-size:8.3px;line-height:11px;color:#111;transform:translate(0.00px,0.39px) scaleX(0.945);"># of Zeros:</span>
<span class="t" style="left:482px;top:239px;font-size:8.3px;line-height:11px;color:#1c9fc0;transform:translate(0.20px,0.39px) scaleX(0.867);-webkit-text-stroke:0.05px;">30</span>
<span class="t" style="left:416px;top:250px;font-size:8.3px;line-height:11px;color:#111;transform:translate(0.00px,0.68px) scaleX(0.914);">Avg Hits / Bin:</span>
<span class="t" style="left:482px;top:250px;font-size:8.3px;line-height:11px;color:#1c9fc0;transform:translate(0.20px,0.68px) scaleX(0.867);-webkit-text-stroke:0.05px;">35.463</span>
<span class="t" style="left:416px;top:261px;font-size:8.3px;line-height:11px;color:#111;transform:translate(0.00px,0.97px) scaleX(0.925);">Min:</span>
<span class="t" style="left:482px;top:261px;font-size:8.3px;line-height:11px;color:#1c9fc0;transform:translate(0.20px,0.97px) scaleX(0.867);-webkit-text-stroke:0.05px;">32</span>
<span class="t" style="left:416px;top:273px;font-size:8.3px;line-height:11px;color:#111;transform:translate(0.00px,0.26px) scaleX(0.917);">Max:</span>
<span class="t" style="left:482px;top:273px;font-size:8.3px;line-height:11px;color:#1c9fc0;transform:translate(0.20px,0.26px) scaleX(0.867);-webkit-text-stroke:0.05px;">262</span>
<span class="t" style="left:416px;top:284px;font-size:8.3px;line-height:11px;color:#111;transform:translate(0.00px,0.55px) scaleX(0.897);">Range:</span>
<span class="t" style="left:482px;top:284px;font-size:8.3px;line-height:11px;color:#1c9fc0;transform:translate(0.20px,0.55px) scaleX(0.867);-webkit-text-stroke:0.05px;">230</span>
<span class="t" style="left:416px;top:295px;font-size:8.3px;line-height:11px;color:#111;transform:translate(0.00px,0.84px) scaleX(0.892);">Average:</span>
<span class="t" style="left:482px;top:295px;font-size:8.3px;line-height:11px;color:#1c9fc0;transform:translate(0.20px,0.84px) scaleX(0.885);-webkit-text-stroke:0.05px;">149.115</span>
<span class="t" style="left:416px;top:307px;font-size:8.3px;line-height:11px;color:#111;transform:translate(0.00px,0.13px) scaleX(0.819);">RMS:</span>
<span class="t" style="left:482px;top:307px;font-size:8.3px;line-height:11px;color:#1c9fc0;transform:translate(0.20px,0.13px) scaleX(0.815);-webkit-text-stroke:0.05px;">152.281 LSBs</span>
<span class="t" style="left:416px;top:318px;font-size:8.3px;line-height:11px;color:#111;transform:translate(0.00px,0.42px) scaleX(0.928);">Transition Noise:</span>
<span class="t" style="left:482px;top:318px;font-size:8.3px;line-height:11px;color:#1c9fc0;transform:translate(0.20px,0.42px) scaleX(0.810);-webkit-text-stroke:0.05px;">30.892 LSBs</span>
<span class="t" style="left:416px;top:329px;font-size:8.3px;line-height:11px;color:#111;transform:translate(0.00px,0.71px) scaleX(0.889);">Sample Frequency:</span>
<span class="t" style="left:482px;top:329px;font-size:8.3px;line-height:11px;color:#1c9fc0;transform:translate(0.20px,0.71px) scaleX(0.885);-webkit-text-stroke:0.05px;">0.256 MHz</span>
<svg class="f" width="1280" height="694" viewBox="0 0 1280 694">
<rect x="422.5" y="640" width="53.2" height="15" rx="3" fill="#e4e4e4"/>
</svg>
<span class="t" style="left:436px;top:642px;font-size:8.1px;line-height:11px;color:#111;transform:translate(0.00px,0.20px) scaleX(0.879);">Clear All</span>
<svg class="f" width="1280" height="694" viewBox="0 0 1280 694">
<rect x="481.3" y="640" width="53" height="15" rx="3" fill="#e4e4e4"/>
</svg>
<span class="t" style="left:497px;top:642px;font-size:8.1px;line-height:11px;color:#111;transform:translate(0.30px,0.20px) scaleX(0.937);">Import</span>
<svg class="f" width="1280" height="694" viewBox="0 0 1280 694">
<rect x="539.8" y="640" width="52.5" height="15" rx="3" fill="#e4e4e4"/>
</svg>
<span class="t" style="left:555px;top:642px;font-size:8.1px;line-height:11px;color:#111;transform:translate(0.50px,0.20px) scaleX(0.918);">Export</span>
<svg class="f" width="1280" height="694" viewBox="0 0 1280 694">
<rect x="594" y="81" width="672" height="577.5" fill="#fff"/>
<rect x="594.4" y="81.5" width="1.1" height="577" fill="#d2d2d2"/>
</svg>
<svg style="left:0;top:0" width="1280" height="694" viewBox="0 0 1280 694"><path d="M628.5 573.70H1256 M628.5 509.35H1256 M628.5 445.00H1256 M628.5 380.65H1256 M628.5 316.30H1256 M628.5 251.95H1256 M628.5 187.60H1256 M677.66 139V614 M813.40 139V614 M949.00 139V614 M1084.50 139V614 M1219.70 139V614" stroke="#dcdcdc" stroke-width="1" fill="none"/><path d="M628.5 139V614" stroke="#cfcfcf" stroke-width="1" fill="none"/><path d="M628.70 573.7v-3.22h1.4v3.22zM631.41 573.7v-3.22h1.4v3.22zM650.36 573.7v-3.22h1.4v3.22zM658.48 573.7v-3.22h1.4v3.22zM682.84 573.7v-3.22h1.4v3.22zM685.54 573.7v-6.43h1.4v6.43zM688.25 573.7v-3.22h1.4v3.22zM690.96 573.7v-6.43h1.4v6.43zM693.67 573.7v-6.43h1.4v6.43zM699.08 573.7v-3.22h1.4v3.22zM701.79 573.7v-6.43h1.4v6.43zM704.49 573.7v-3.22h1.4v3.22zM707.20 573.7v-3.22h1.4v3.22zM709.91 573.7v-6.43h1.4v6.43zM712.61 573.7v-16.09h1.4v16.09zM715.32 573.7v-6.43h1.4v6.43zM718.03 573.7v-3.22h1.4v3.22zM723.44 573.7v-6.43h1.4v6.43zM726.15 573.7v-6.43h1.4v6.43zM728.86 573.7v-3.22h1.4v3.22zM731.56 573.7v-9.65h1.4v9.65zM734.27 573.7v-16.09h1.4v16.09zM736.98 573.7v-16.09h1.4v16.09zM739.68 573.7v-22.52h1.4v22.52zM742.39 573.7v-9.65h1.4v9.65zM745.10 573.7v-28.96h1.4v28.96zM747.80 573.7v-22.52h1.4v22.52zM750.51 573.7v-28.96h1.4v28.96zM753.22 573.7v-12.87h1.4v12.87zM755.92 573.7v-28.96h1.4v28.96zM758.63 573.7v-19.30h1.4v19.30zM761.34 573.7v-28.96h1.4v28.96zM764.04 573.7v-45.04h1.4v45.04zM766.75 573.7v-19.30h1.4v19.30zM769.46 573.7v-45.04h1.4v45.04zM772.17 573.7v-35.39h1.4v35.39zM774.87 573.7v-54.70h1.4v54.70zM777.58 573.7v-45.04h1.4v45.04zM780.29 573.7v-61.13h1.4v61.13zM782.99 573.7v-54.70h1.4v54.70zM785.70 573.7v-61.13h1.4v61.13zM788.41 573.7v-61.13h1.4v61.13zM791.11 573.7v-57.91h1.4v57.91zM793.82 573.7v-77.22h1.4v77.22zM796.53 573.7v-70.78h1.4v70.78zM799.23 573.7v-51.48h1.4v51.48zM801.94 573.7v-77.22h1.4v77.22zM804.65 573.7v-83.66h1.4v83.66zM807.36 573.7v-125.48h1.4v125.48zM810.06 573.7v-144.79h1.4v144.79zM812.77 573.7v-115.83h1.4v115.83zM815.48 573.7v-102.96h1.4v102.96zM818.18 573.7v-102.96h1.4v102.96zM820.89 573.7v-119.05h1.4v119.05zM823.60 573.7v-109.39h1.4v109.39zM826.30 573.7v-83.66h1.4v83.66zM829.01 573.7v-144.79h1.4v144.79zM831.72 573.7v-115.83h1.4v115.83zM834.42 573.7v-151.22h1.4v151.22zM837.13 573.7v-106.18h1.4v106.18zM839.84 573.7v-167.31h1.4v167.31zM842.55 573.7v-180.18h1.4v180.18zM845.25 573.7v-164.09h1.4v164.09zM847.96 573.7v-141.57h1.4v141.57zM850.67 573.7v-180.18h1.4v180.18zM853.37 573.7v-167.31h1.4v167.31zM856.08 573.7v-173.74h1.4v173.74zM858.79 573.7v-202.70h1.4v202.70zM861.49 573.7v-189.83h1.4v189.83zM864.20 573.7v-222.01h1.4v222.01zM866.91 573.7v-205.92h1.4v205.92zM869.61 573.7v-212.35h1.4v212.35zM872.32 573.7v-202.70h1.4v202.70zM875.03 573.7v-228.44h1.4v228.44zM877.73 573.7v-260.62h1.4v260.62zM880.44 573.7v-228.44h1.4v228.44zM883.15 573.7v-308.88h1.4v308.88zM885.86 573.7v-299.23h1.4v299.23zM888.56 573.7v-244.53h1.4v244.53zM891.27 573.7v-283.14h1.4v283.14zM893.98 573.7v-263.83h1.4v263.83zM896.68 573.7v-334.62h1.4v334.62zM899.39 573.7v-283.14h1.4v283.14zM902.10 573.7v-276.70h1.4v276.70zM904.80 573.7v-283.14h1.4v283.14zM907.51 573.7v-305.66h1.4v305.66zM910.22 573.7v-292.79h1.4v292.79zM912.92 573.7v-328.19h1.4v328.19zM915.63 573.7v-331.40h1.4v331.40zM918.34 573.7v-331.40h1.4v331.40zM921.05 573.7v-296.01h1.4v296.01zM923.75 573.7v-302.44h1.4v302.44zM926.46 573.7v-321.75h1.4v321.75zM929.17 573.7v-353.92h1.4v353.92zM931.87 573.7v-331.40h1.4v331.40zM934.58 573.7v-357.14h1.4v357.14zM937.29 573.7v-337.84h1.4v337.84zM939.99 573.7v-366.79h1.4v366.79zM942.70 573.7v-315.31h1.4v315.31zM945.41 573.7v-341.06h1.4v341.06zM948.11 573.7v-324.97h1.4v324.97zM950.82 573.7v-350.71h1.4v350.71zM953.53 573.7v-331.40h1.4v331.40zM956.23 573.7v-344.27h1.4v344.27zM958.94 573.7v-395.75h1.4v395.75zM961.65 573.7v-341.06h1.4v341.06zM964.36 573.7v-324.97h1.4v324.97zM967.06 573.7v-357.14h1.4v357.14zM969.77 573.7v-308.88h1.4v308.88zM972.48 573.7v-286.36h1.4v286.36zM975.18 573.7v-299.23h1.4v299.23zM977.89 573.7v-324.97h1.4v324.97zM980.60 573.7v-331.40h1.4v331.40zM983.30 573.7v-292.79h1.4v292.79zM986.01 573.7v-267.05h1.4v267.05zM988.72 573.7v-347.49h1.4v347.49zM991.42 573.7v-273.49h1.4v273.49zM994.13 573.7v-263.83h1.4v263.83zM996.84 573.7v-225.22h1.4v225.22zM999.55 573.7v-286.36h1.4v286.36zM1002.25 573.7v-250.96h1.4v250.96zM1004.96 573.7v-241.31h1.4v241.31zM1007.67 573.7v-209.14h1.4v209.14zM1010.37 573.7v-244.53h1.4v244.53zM1013.08 573.7v-337.84h1.4v337.84zM1015.79 573.7v-241.31h1.4v241.31zM1018.49 573.7v-238.09h1.4v238.09zM1021.20 573.7v-260.62h1.4v260.62zM1023.91 573.7v-231.66h1.4v231.66zM1026.61 573.7v-247.75h1.4v247.75zM1029.32 573.7v-157.66h1.4v157.66zM1032.03 573.7v-189.83h1.4v189.83zM1034.73 573.7v-193.05h1.4v193.05zM1037.44 573.7v-215.57h1.4v215.57zM1040.15 573.7v-183.40h1.4v183.40zM1042.86 573.7v-225.22h1.4v225.22zM1045.56 573.7v-167.31h1.4v167.31zM1048.27 573.7v-180.18h1.4v180.18zM1050.98 573.7v-112.61h1.4v112.61zM1053.68 573.7v-160.88h1.4v160.88zM1056.39 573.7v-131.92h1.4v131.92zM1059.10 573.7v-109.39h1.4v109.39zM1061.80 573.7v-112.61h1.4v112.61zM1064.51 573.7v-135.13h1.4v135.13zM1067.22 573.7v-131.92h1.4v131.92zM1069.92 573.7v-90.09h1.4v90.09zM1072.63 573.7v-148.00h1.4v148.00zM1075.34 573.7v-99.74h1.4v99.74zM1078.05 573.7v-106.18h1.4v106.18zM1080.75 573.7v-112.61h1.4v112.61zM1083.46 573.7v-83.66h1.4v83.66zM1086.17 573.7v-90.09h1.4v90.09zM1088.87 573.7v-80.44h1.4v80.44zM1091.58 573.7v-80.44h1.4v80.44zM1094.29 573.7v-80.44h1.4v80.44zM1096.99 573.7v-57.91h1.4v57.91zM1099.70 573.7v-67.57h1.4v67.57zM1102.41 573.7v-41.83h1.4v41.83zM1105.11 573.7v-80.44h1.4v80.44zM1107.82 573.7v-64.35h1.4v64.35zM1110.53 573.7v-22.52h1.4v22.52zM1113.24 573.7v-48.26h1.4v48.26zM1115.94 573.7v-45.04h1.4v45.04zM1118.65 573.7v-28.96h1.4v28.96zM1121.36 573.7v-32.17h1.4v32.17zM1124.06 573.7v-51.48h1.4v51.48zM1126.77 573.7v-12.87h1.4v12.87zM1129.48 573.7v-22.52h1.4v22.52zM1132.18 573.7v-35.39h1.4v35.39zM1134.89 573.7v-25.74h1.4v25.74zM1137.60 573.7v-12.87h1.4v12.87zM1140.30 573.7v-19.30h1.4v19.30zM1143.01 573.7v-16.09h1.4v16.09zM1145.72 573.7v-25.74h1.4v25.74zM1148.42 573.7v-19.30h1.4v19.30zM1151.13 573.7v-25.74h1.4v25.74zM1153.84 573.7v-9.65h1.4v9.65zM1156.55 573.7v-6.43h1.4v6.43zM1159.25 573.7v-3.22h1.4v3.22zM1161.96 573.7v-9.65h1.4v9.65zM1164.67 573.7v-25.74h1.4v25.74zM1167.37 573.7v-3.22h1.4v3.22zM1170.08 573.7v-16.09h1.4v16.09zM1175.49 573.7v-3.22h1.4v3.22zM1178.20 573.7v-6.43h1.4v6.43zM1180.91 573.7v-9.65h1.4v9.65zM1186.32 573.7v-3.22h1.4v3.22zM1189.03 573.7v-6.43h1.4v6.43zM1191.74 573.7v-3.22h1.4v3.22zM1194.44 573.7v-3.22h1.4v3.22zM1197.15 573.7v-3.22h1.4v3.22zM1199.86 573.7v-6.43h1.4v6.43zM1202.56 573.7v-6.43h1.4v6.43zM1207.98 573.7v-3.22h1.4v3.22zM1213.39 573.7v-6.43h1.4v6.43zM1216.10 573.7v-3.22h1.4v3.22zM1218.80 573.7v-3.22h1.4v3.22zM1226.92 573.7v-3.22h1.4v3.22zM1229.63 573.7v-3.22h1.4v3.22zM1243.17 573.7v-3.22h1.4v3.22zM1251.29 573.7v-3.22h1.4v3.22z" fill="#0a9fbe"/></svg>
<span class="t" style="left:614px;top:567px;font-size:8px;line-height:11px;color:#262626;transform:translate(0.00px,0.90px) scaleX(0.899);">0</span>
<span class="t" style="left:614px;top:503px;font-size:8px;line-height:11px;color:#262626;transform:translate(0.00px,0.55px) scaleX(0.899);">20</span>
<span class="t" style="left:614px;top:439px;font-size:8px;line-height:11px;color:#262626;transform:translate(0.00px,0.20px) scaleX(0.899);">40</span>
<span class="t" style="left:614px;top:374px;font-size:8px;line-height:11px;color:#262626;transform:translate(0.00px,0.85px) scaleX(0.899);">60</span>
<span class="t" style="left:614px;top:310px;font-size:8px;line-height:11px;color:#262626;transform:translate(0.00px,0.50px) scaleX(0.899);">80</span>
<span class="t" style="left:614px;top:246px;font-size:8px;line-height:11px;color:#262626;transform:translate(0.00px,0.15px) scaleX(0.899);">100</span>
<span class="t" style="left:614px;top:181px;font-size:8px;line-height:11px;color:#262626;transform:translate(0.00px,0.80px) scaleX(0.899);">120</span>
<span class="t" style="left:673px;top:614px;font-size:8px;line-height:11px;color:#262626;transform:translate(0.76px,0.40px) scaleX(0.899);">50</span>
<span class="t" style="left:807px;top:614px;font-size:8px;line-height:11px;color:#262626;transform:translate(0.50px,0.40px) scaleX(0.899);">100</span>
<span class="t" style="left:943px;top:614px;font-size:8px;line-height:11px;color:#262626;transform:translate(0.10px,0.40px) scaleX(0.899);">150</span>
<span class="t" style="left:1078px;top:614px;font-size:8px;line-height:11px;color:#262626;transform:translate(0.60px,0.40px) scaleX(0.899);">200</span>
<span class="t" style="left:1213px;top:614px;font-size:8px;line-height:11px;color:#262626;transform:translate(0.80px,0.40px) scaleX(0.899);">250</span>
<span class="t" style="left:901px;top:628px;font-size:9.2px;line-height:12px;color:#000;transform:translate(0.50px,0.60px) scaleX(0.998);font-weight:700;-webkit-text-stroke:0.2px;">Amplitude (Codes)</span>
<span class="t" style="left:902px;top:122px;font-size:10px;line-height:13px;color:#111;transform:translate(0.00px,0.30px) scaleX(1.011);font-weight:700;">Histogram</span>
<span class="t" style="left:605.4px;top:375.8px;-webkit-text-stroke:.2px;font-size:9.2px;line-height:12px;font-weight:700;color:#000;transform:translate(-50%,-50%) rotate(-90deg) scaleX(0.942);transform-origin:50% 50%">Occurrences</span>
<svg class="f" width="1280" height="694" viewBox="0 0 1280 694">
<rect x="632" y="142.4" width="58.6" height="18.4" fill="rgba(0,0,0,.065)"/>
</svg>
<svg style="left:638.5px;top:145px" width="12.6" height="12.6" viewBox="0 0 12.6 12.6"><rect width="12.6" height="12.6" fill="#0a9cbc"/><path d="M2.6 6.6l2.7 2.7 4.8-5.8" fill="none" stroke="#fff" stroke-width="1.6"/></svg>
<svg class="f" width="1280" height="694" viewBox="0 0 1280 694">
<rect x="654" y="145" width="13.4" height="12.6" fill="#0a9cbc"/>
</svg>
<span class="t" style="left:671px;top:145px;font-size:8.2px;line-height:11px;color:#111;transform:translate(0.00px,0.70px) scaleX(1.019);font-weight:700;-webkit-text-stroke:0.08px;">IN0</span>
<svg class="f" width="1280" height="694" viewBox="0 0 1280 694">
<rect x="636.1" y="645.1" width="612.6" height="9.6" rx="2.5" fill="#fff" stroke="#6a6a6a" stroke-width="1.4"/>
</svg>
<svg style="left:638.5px;top:647px" width="6" height="6" viewBox="0 0 6 6"><path d="M5.4 .4v5L.6 2.900z" fill="#111"/></svg>
<svg style="left:1240.5px;top:647px" width="6" height="6" viewBox="0 0 6 6"><path d="M.6 .4v5l4.8-2.500z" fill="#111"/></svg>
<svg style="left:1230.5px;top:87.5px" width="10" height="9" viewBox="0 0 10 9"><path d="M0 2.500h3.200M0 6.500h3.200M3.2 2.500v4M4.6 .3v8.4" stroke="#8cc7d6" stroke-width=".8" fill="none"/><rect x="5.9" y="2.3" width="3" height="4.4" rx=".6" fill="#1a8fb0"/></svg>
<svg style="left:1245.8px;top:86.5px" width="12" height="12" viewBox="0 0 12 12"><rect x=".6" y=".6" width="10" height="10" rx=".6" fill="#eef8fa" stroke="#1a8fb0" stroke-width="1.1"/><path d="M.6 3.900h10M.6 7.300h10M3.9 .6v10M7.3 .6v10" stroke="#1a8fb0" stroke-width=".8"/></svg>
<svg class="f" width="1280" height="694" viewBox="0 0 1280 694">
<rect x="630.8" y="103.4" width="15.9" height="15.8" fill="#0a9cbc"/>
</svg>
<svg style="left:633.5px;top:106px" width="11" height="11" viewBox="0 0 11 11"><circle cx="6.8" cy="4" r="2.6" fill="none" stroke="#fff" stroke-width="1.1"/><circle cx="6.8" cy="4" r=".8" fill="#fff"/><path d="M4.8 6L1.3 9.6" stroke="#1c4f66" stroke-width="1.5"/></svg>
<svg style="left:651px;top:106px" width="11" height="11" viewBox="0 0 11 11"><g fill="none" stroke="#0f7b9c" stroke-width="1.5" stroke-linecap="round"><path d="M3.6 5.200L5.8 2M5 6l2.6-3.700M6.5 6.800L9.2 3.200M8 7.600l2-2.6"/></g><path d="M1.2 5.600c.6-1.4 1.7-1.3 2.3-.3l1 1.3 4.3 1.700c-.6 1.6-2 2.6-3.7 2.5-2.5-.2-4.5-2.8-3.9-5.200z" fill="#0f7b9c"/></svg>
<svg class="f" width="1280" height="694" viewBox="0 0 1280 694">
<rect x="665.8" y="104.9" width="52.2" height="12.8" fill="#fff" stroke="#d3e9ef" stroke-width="1"/>
</svg>
<span class="t" style="left:672px;top:106px;font-size:8.4px;line-height:11px;color:#2a9fc0;transform:translate(0.00px,0.60px) scaleX(0.902);">XYDirection</span>
<svg style="left:714.7px;top:115.0px" width="3" height="2" viewBox="0 0 3 2"><path d="M0 0h2.600L1.3 1.600z" fill="#1a8fb0"/></svg>
<svg class="f" width="1280" height="694" viewBox="0 0 1280 694">
<rect x="894.9" y="104.9" width="31.8" height="13" fill="#fff" stroke="#d3e9ef" stroke-width="1"/>
</svg>
<span class="t" style="left:900px;top:106px;font-size:8.4px;line-height:11px;color:#2a9fc0;transform:translate(0.00px,0.70px) scaleX(0.881);">Codes</span>
<svg style="left:923.4px;top:115.2px" width="3" height="2" viewBox="0 0 3 2"><path d="M0 0h2.600L1.3 1.600z" fill="#1a8fb0"/></svg>
<svg class="f" width="1280" height="694" viewBox="0 0 1280 694">
<rect x="721" y="105" width="1" height="13" fill="#c9c9c9"/>
<rect x="779.1" y="105" width="1" height="13" fill="#c9c9c9"/>
<rect x="872" y="105" width="1" height="13" fill="#c9c9c9"/>
<rect x="930" y="105" width="1" height="13" fill="#c9c9c9"/>
<rect x="967.8" y="105" width="1" height="13" fill="#c9c9c9"/>
</svg>
<svg style="left:727px;top:104px" width="15" height="15" viewBox="0 0 15 15"><circle cx="7.3" cy="7.5" r="4.4" fill="none" stroke="#0e7fa0" stroke-width="1.1"/><circle cx="7.3" cy="7.5" r="2" fill="none" stroke="#0e7fa0" stroke-width=".75"/><path d="M7.3 1v13M.8 7.5h13" fill="none" stroke="#0e7fa0" stroke-width=".75"/></svg>
<svg style="left:744px;top:107px" width="15" height="9" viewBox="0 0 15 9"><path d="M1 4.5h12.4M4.2 1.300L1 4.500l3.2 3.200M10.2 1.300l3.2 3.2-3.2 3.2" fill="none" stroke="#0e7fa0" stroke-width=".75"/></svg>
<svg style="left:764px;top:104px" width="9" height="15" viewBox="0 0 9 15"><path d="M4.5 1.200v12.600M1.3 4.400l3.2-3.2 3.2 3.200M1.3 10.600l3.2 3.2 3.2-3.2" fill="none" stroke="#0e7fa0" stroke-width=".75"/></svg>
<svg style="left:787px;top:106.5px" width="10" height="10" viewBox="0 0 10 10"><path d="M.5 3.400V.5h2.900M6.6 .5h2.900v2.900M9.5 6.600v2.900H6.600M3.4 9.500H.5V6.600M.5 .5l2.6 2.600M9.5 .5L6.9 3.100M9.5 9.500L6.9 6.900M.5 9.500l2.6-2.6" fill="none" stroke="#1a8fb0" stroke-width="1"/></svg>
<svg style="left:804.5px;top:107px" width="10" height="9.5" viewBox="0 0 10 9.5"><path d="M0 8.700h9.6" stroke="#16789a" stroke-width="1.1"/><path d="M2.2 6.500V1.300h5.200v5.200M.8 5.300l1.4 1.4 1.4-1.4" fill="none" stroke="#16789a" stroke-width="1"/></svg>
<span class="t" style="left:821px;top:105px;font-size:8.8px;line-height:12px;color:#0a5f7e;transform:translate(0.00px,0.20px) scaleX(0.832);-webkit-text-stroke:0.3px;">X,Y</span>
<span class="t" style="left:838px;top:107px;font-size:6.5px;line-height:9px;color:#0f7394;transform:scaleX(0.861);font-weight:700;-webkit-text-stroke:0.2px;">LEG</span>
<svg style="left:856.5px;top:106.5px" width="10" height="10" viewBox="0 0 10 10"><circle cx="6.2" cy="3.8" r="3" fill="none" stroke="#16789a" stroke-width="1.1"/><path d="M4.7 3.800h3" stroke="#16789a" stroke-width=".8"/><path d="M4 6L.8 9.2" stroke="#16789a" stroke-width="1.6"/></svg>
<svg style="left:881.5px;top:107.5px" width="7" height="8" viewBox="0 0 7 8"><path d="M.6 7.600l.7-2.300L5.2.8l1.4 1.4-4.1 4.700z" fill="#16789a"/></svg>
<svg style="left:936px;top:106px" width="11" height="10.5" viewBox="0 0 11 10.5"><path d="M6.2 9.700H.6V.6h4l1.9 1.900v1.7" fill="none" stroke="#16789a" stroke-width="1.1"/><path d="M4 6h5.500M7.7 4l2 2-2 2" fill="none" stroke="#16789a" stroke-width="1.3"/></svg>
<svg style="left:954px;top:106px" width="10" height="10.5" viewBox="0 0 10 10.5"><rect x=".6" y=".8" width="8.4" height="9" rx="1" fill="#eaf6f9" stroke="#16789a" stroke-width="1.1"/><path d="M.6 3h8.4" stroke="#16789a" stroke-width=".9"/><path d="M7 4.800v3L4.8 6.300z" fill="#16789a"/></svg>
</div></body></html>
